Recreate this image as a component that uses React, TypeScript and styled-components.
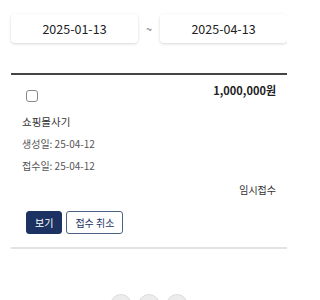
import React from 'react'
import styled, { createGlobalStyle } from 'styled-components'

const GlobalStyle = createGlobalStyle`
  html, body {
    margin: 0;
    padding: 0;
    background: #fff;
    font-family: 'Noto Sans CJK KR', 'Noto Sans', sans-serif;
    color: #222;
  }
`

const Page = styled.div`
  width: 276px;
  padding: 14px 0 0 11px;
  overflow: hidden;
  height: 286px;
`

const DateRow = styled.div`
  display: flex;
  align-items: center;
  justify-content: space-between;
`

const DateBox = styled.div`
  width: 127px;
  height: 29px;
  display: flex;
  align-items: center;
  justify-content: center;
  border-radius: 4px;
  box-shadow: 0 1px 3px rgba(0, 0, 0, 0.16);
  font-size: 12.5px;
  color: #222;
`

const Tilde = styled.span`
  font-size: 10px;
  color: #555;
`

const List = styled.div`
  margin-top: 30px;
  border-top: 2px solid #444;
  border-bottom: 2px solid #e3e3e3;
`

const Item = styled.div`
  padding: 9px 11px 13px 11px;
  display: flex;
  flex-direction: column;
`

const TopLine = styled.div`
  display: flex;
  justify-content: space-between;
  align-items: flex-start;
`

const Check = styled.span`
  width: 10px;
  height: 10px;
  margin: 6px 0 0 4px;
  border: 1.5px solid #888;
  border-radius: 3px;
`

const Amount = styled.span`
  font-size: 11px;
  line-height: 13px;
  font-weight: 700;
  color: #222;
`

const Title = styled.div`
  margin-top: 11px;
  font-size: 10.5px;
  color: #333;
  line-height: 18px;
`

const Meta = styled.div`
  margin-top: 4px;
  font-size: 10px;
  color: #555;
  line-height: 18px;
`

const Status = styled.div`
  margin-top: 6px;
  text-align: right;
  font-size: 10px;
  color: #333;
  line-height: 18px;
`

const Actions = styled.div`
  display: flex;
  gap: 4px;
  margin-top: 12px;
  padding-left: 4px;
`

const Button = styled.button<{ $primary?: boolean }>`
  height: 23px;
  padding: 0 8px;
  border-radius: 3px;
  font-family: inherit;
  font-size: 10px;
  line-height: 1;
  border: 1px solid ${p => (p.$primary ? '#1b3262' : '#4d6386')};
  background: ${p => (p.$primary ? '#1b3262' : '#fff')};
  color: ${p => (p.$primary ? '#fff' : '#1b3262')};
`

const Pager = styled.div`
  display: flex;
  justify-content: center;
  gap: 6px;
  margin-top: 45px;
`

const Dot = styled.span`
  width: 20px;
  height: 20px;
  border-radius: 50%;
  background: #ececec;
  border: 1px solid #dcdcdc;
`

export default function App() {
  return (
    <>
      <GlobalStyle />
      <Page>
        <DateRow>
          <DateBox>2025-01-13</DateBox>
          <Tilde>~</Tilde>
          <DateBox>2025-04-13</DateBox>
        </DateRow>
        <List>
          <Item>
            <TopLine>
              <Check />
              <Amount>1,000,000원</Amount>
            </TopLine>
            <Title>쇼핑몰사기</Title>
            <Meta>생성일: 25-04-12</Meta>
            <Meta>접수일: 25-04-12</Meta>
            <Status>임시접수</Status>
            <Actions>
              <Button $primary>보기</Button>
              <Button>접수 취소</Button>
            </Actions>
          </Item>
        </List>
        <Pager>
          <Dot />
          <Dot />
          <Dot />
        </Pager>
      </Page>
    </>
  )
}
